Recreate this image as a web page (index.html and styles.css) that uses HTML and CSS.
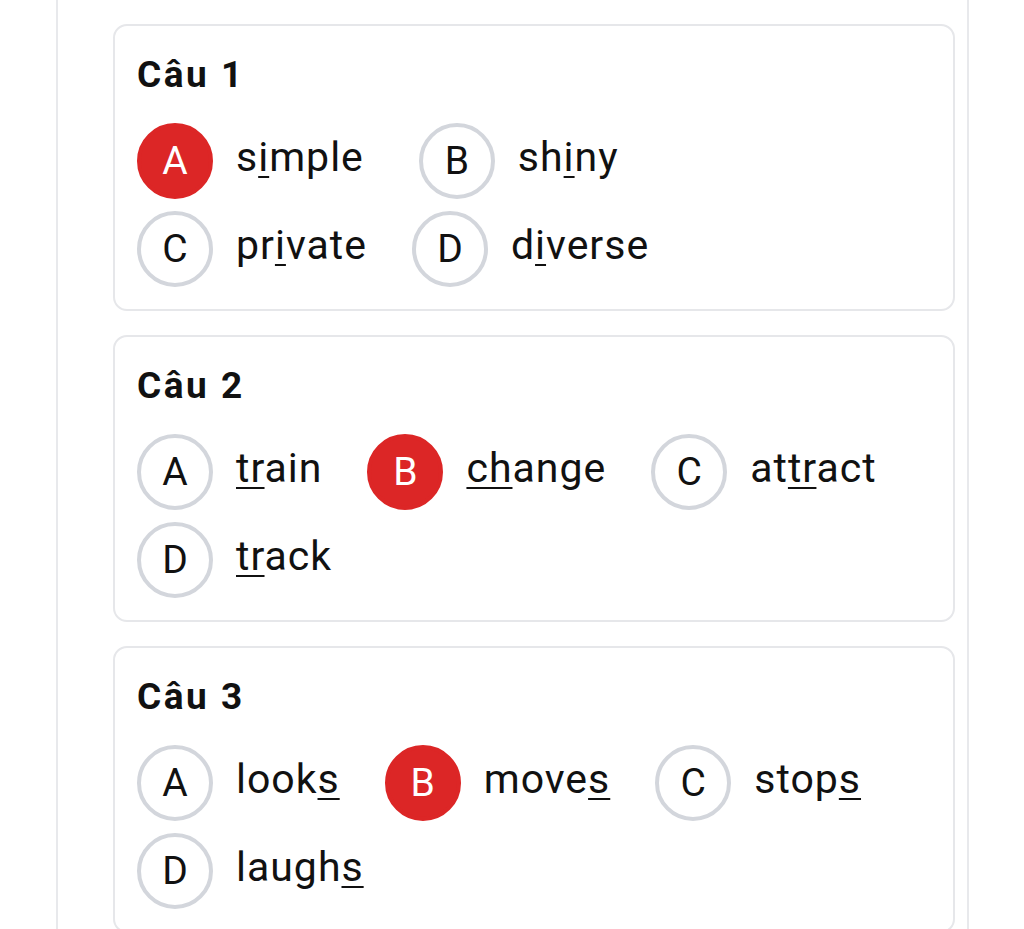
FILE: index.html
```html
<!DOCTYPE html>
<html lang="vi">
<head>
<meta charset="utf-8">
<title>Câu hỏi</title>
<link rel="stylesheet" href="styles.css">
</head>
<body>
<main class="sheet">
  <section class="card">
    <h2 class="title">Câu 1</h2>
    <div class="options">
      <div class="row">
        <div class="opt"><span class="badge selected">A</span><span class="word wide">s<u>i</u>mple</span></div>
        <div class="opt"><span class="badge">B</span><span class="word">sh<u>i</u>ny</span></div>
      </div>
      <div class="row">
        <div class="opt"><span class="badge">C</span><span class="word">pr<u>i</u>vate</span></div>
        <div class="opt"><span class="badge">D</span><span class="word">d<u>i</u>verse</span></div>
      </div>
    </div>
  </section>
  <section class="card">
    <h2 class="title">Câu 2</h2>
    <div class="options">
      <div class="row">
        <div class="opt"><span class="badge">A</span><span class="word"><u>tr</u>ain</span></div>
        <div class="opt"><span class="badge selected">B</span><span class="word"><u>ch</u>ange</span></div>
        <div class="opt"><span class="badge">C</span><span class="word">at<u>tr</u>act</span></div>
      </div>
      <div class="row">
        <div class="opt"><span class="badge">D</span><span class="word"><u>tr</u>ack</span></div>
      </div>
    </div>
  </section>
  <section class="card">
    <h2 class="title">Câu 3</h2>
    <div class="options">
      <div class="row">
        <div class="opt"><span class="badge">A</span><span class="word">look<u>s</u></span></div>
        <div class="opt"><span class="badge selected">B</span><span class="word">move<u>s</u></span></div>
        <div class="opt"><span class="badge">C</span><span class="word">stop<u>s</u></span></div>
      </div>
      <div class="row">
        <div class="opt"><span class="badge">D</span><span class="word">laugh<u>s</u></span></div>
      </div>
    </div>
  </section>
</main>
</body>
</html>
```
FILE: styles.css
```css
html, body {
  margin: 0;
  padding: 0;
  background: #ffffff;
}
body {
  font-family: Roboto, "Noto Sans", "Liberation Sans", sans-serif;
  color: #111111;
}
.sheet {
  box-sizing: border-box;
  width: 913px;
  min-height: 929px;
  margin-left: 56px;
  border-left: 2px solid #e8e9ec;
  border-right: 2px solid #e8e9ec;
  padding: 24px 12px 24px 55px;
  display: flex;
  flex-direction: column;
  gap: 24px;
}
.card {
  border: 2px solid #e6e7ea;
  border-radius: 14px;
  padding: 28px 22px 22px 22px;
}
.title {
  margin: 0 0 28px 0;
  font-size: 37px;
  font-weight: 700;
  line-height: 41px;
  letter-spacing: 2.5px;
}
.options {
  display: flex;
  flex-direction: column;
  gap: 12px;
}
.row {
  display: flex;
  gap: 45px;
}
.opt {
  display: flex;
  align-items: center;
  gap: 23px;
}
.badge {
  box-sizing: border-box;
  flex: none;
  width: 76px;
  height: 76px;
  border-radius: 50%;
  border: 4px solid #d3d6dc;
  display: flex;
  align-items: center;
  justify-content: center;
  font-size: 39px;
  color: #111111;
}
.badge.selected {
  background: #dc2626;
  border-color: #dc2626;
  color: #ffffff;
}
.word {
  font-size: 41px;
  margin-bottom: 8px;
  letter-spacing: 1px;
}
.word.wide {
  margin-right: 10px;
}
.word u {
  text-decoration-thickness: 2px;
  text-underline-offset: 5px;
}
```
